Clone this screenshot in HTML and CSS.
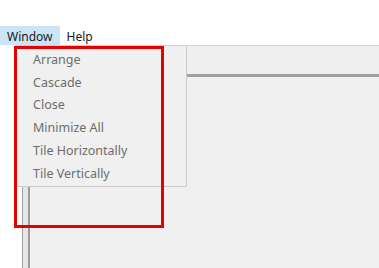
FILE: index.html
```html
<!DOCTYPE html>
<html lang="en">
<head>
  <meta charset="UTF-8">
  <title>Window Menu</title>
  <link rel="stylesheet" href="styles.css">
</head>
<body>

<div class="menubar">
  <span class="menu-item active">Window</span>
  <span class="menu-item">Help</span>
</div>

<div class="workspace">
  <div class="splitter"></div>
  <div class="mdi">
    <div class="mdi-top"></div>
    <div class="mdi-body"></div>
  </div>
</div>

<ul class="dropdown">
  <li>Arrange</li>
  <li>Cascade</li>
  <li>Close</li>
  <li>Minimize All</li>
  <li>Tile Horizontally</li>
  <li>Tile Vertically</li>
</ul>

<div class="mark"></div>

</body>
</html>
```

FILE: styles.css
```css
html, body {
  margin: 0;
  height: 100%;
  overflow: hidden;
}
body {
  font-family: 'Noto Sans', 'Open Sans', sans-serif;
  font-size: 12px;
  background-color: #ffffff;
  position: relative;
}
.menubar {
  display: flex;
  margin-top: 26px;
  height: 19px;
}
.menu-item {
  padding: 0 6px;
  line-height: 19px;
  color: #1a1a1a;
  border: 1px solid transparent;
  border-bottom: none;
}
.menu-item.active {
  background-color: #cce4f7;
  border-color: #cce4f7;
}
.workspace {
  display: flex;
  margin-left: 22px;
  height: 223px;
}
.splitter {
  width: 5px;
  border-left: 1px solid #a0a0a0;
  border-right: 2px solid #9a9a9a;
  background-color: #e6e6e6;
}
.mdi {
  flex: 1;
  display: flex;
  flex-direction: column;
  background-color: #f0f0f0;
}
.mdi-top {
  height: 28px;
  border-top: 1px solid #d4d4d4;
  border-bottom: 3px solid #a0a0a0;
  background-color: #efefef;
}
.mdi-body {
  flex: 1;
  background-color: #f0f0f0;
}
.dropdown {
  position: absolute;
  left: 15px;
  top: 45px;
  width: 170px;
  height: 137px;
  margin: 0;
  padding: 3px 0 0 0;
  list-style: none;
  background-color: #f0f0f0;
  border: 1px solid #cccccc;
}
.dropdown li {
  padding-left: 17px;
  font-size: 12.5px;
  line-height: 22.7px;
  color: #6d6d6d;
}
.mark {
  position: absolute;
  left: 14px;
  top: 46px;
  width: 144px;
  height: 176px;
  border: 3px solid #e60000;
}
```
